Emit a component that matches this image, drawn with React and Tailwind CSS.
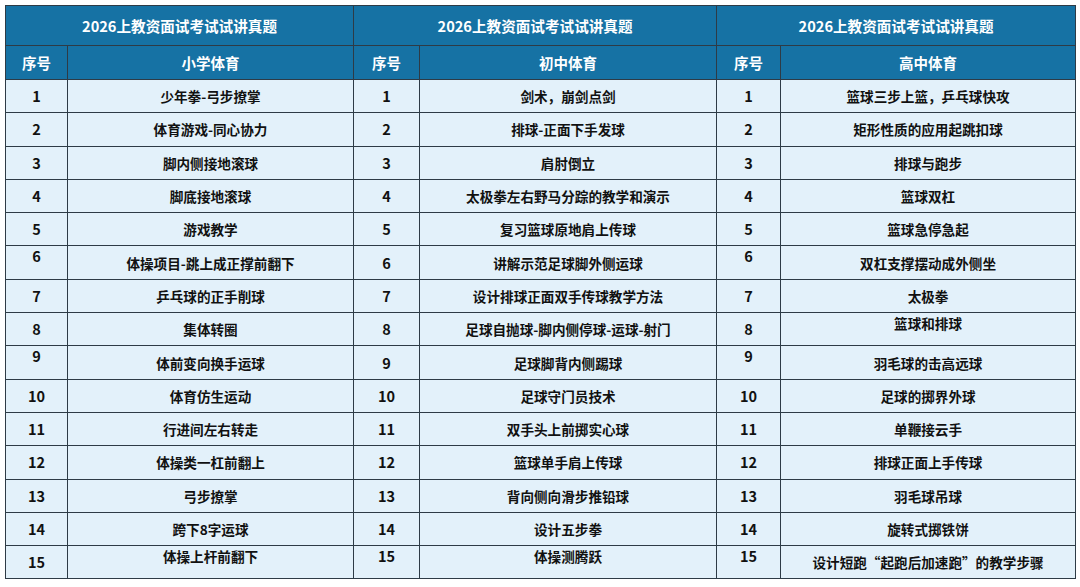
const ROWS = [
  ['少年拳-弓步撩掌', '剑术，崩剑点剑', '篮球三步上篮，乒乓球快攻'],
  ['体育游戏-同心协力', '排球-正面下手发球', '矩形性质的应用起跳扣球'],
  ['脚内侧接地滚球', '肩肘倒立', '排球与跑步'],
  ['脚底接地滚球', '太极拳左右野马分踪的教学和演示', '篮球双杠'],
  ['游戏教学', '复习篮球原地肩上传球', '篮球急停急起'],
  ['体操项目-跳上成正撑前翻下', '讲解示范足球脚外侧运球', '双杠支撑摆动成外侧坐'],
  ['乒乓球的正手削球', '设计排球正面双手传球教学方法', '太极拳'],
  ['集体转圈', '足球自抛球-脚内侧停球-运球-射门', '篮球和排球'],
  ['体前变向换手运球', '足球脚背内侧踢球', '羽毛球的击高远球'],
  ['体育仿生运动', '足球守门员技术', '足球的掷界外球'],
  ['行进间左右转走', '双手头上前掷实心球', '单鞭接云手'],
  ['体操类一杠前翻上', '篮球单手肩上传球', '排球正面上手传球'],
  ['弓步撩掌', '背向侧向滑步推铅球', '羽毛球吊球'],
  ['跨下8字运球', '设计五步拳', '旋转式掷铁饼'],
  ['体操上杆前翻下', '体操测腾跃', '设计短跑“起跑后加速跑”的教学步骤'],
]

// cells that sit higher than the middle of their row: row-column (0..5)
const RAISED = new Set(['5-0', '5-4', '7-5', '8-0', '8-4', '14-1', '14-2', '14-3', '14-4'])

const SECTIONS = ['小学体育', '初中体育', '高中体育']

function Cell({ children, raised }) {
  return (
    <td className="border border-[#2e3b46] bg-[#e3f1fa] p-0">
      <div className={`flex justify-center h-[32.3px] leading-[18px] ${raised ? 'items-start pt-[1px]' : 'items-center'}`}>
        {children}
      </div>
    </td>
  )
}

export default function App() {
  return (
    <div className="min-h-screen bg-white p-[5px] font-['Noto_Sans_CJK_SC','Noto_Sans',sans-serif]">
      <table className="w-[1070px] border-collapse table-fixed text-center">
        <colgroup>
          <col className="w-[62px]" />
          <col className="w-[286px]" />
          <col className="w-[66px]" />
          <col className="w-[297px]" />
          <col className="w-[64px]" />
          <col className="w-[295px]" />
        </colgroup>
        <thead>
          <tr className="h-[40px] bg-[#1672a4] text-white text-[14.6px] font-bold">
            {SECTIONS.map((s) => (
              <th key={s} colSpan={2} className="border border-[#2e3b46] font-bold">
                2026上教资面试考试试讲真题
              </th>
            ))}
          </tr>
          <tr className="h-[34px] bg-[#1672a4] text-white text-[14.5px] font-bold">
            {SECTIONS.map((s) => (
              <>
                <th key={s + 'n'} className="border border-[#2e3b46] font-bold">序号</th>
                <th key={s} className="border border-[#2e3b46] font-bold">{s}</th>
              </>
            ))}
          </tr>
        </thead>
        <tbody className="text-[13.6px] font-bold text-[#111]">
          {ROWS.map((r, i) => (
            <tr key={i}>
              {r.map((t, j) => (
                <>
                  <Cell key={j + 'n'} raised={RAISED.has(`${i}-${j * 2}`)}>
                    <span className="text-[14.5px]">{i + 1}</span>
                  </Cell>
                  <Cell key={j} raised={RAISED.has(`${i}-${j * 2 + 1}`)}>
                    {t}
                  </Cell>
                </>
              ))}
            </tr>
          ))}
        </tbody>
      </table>
    </div>
  )
}
